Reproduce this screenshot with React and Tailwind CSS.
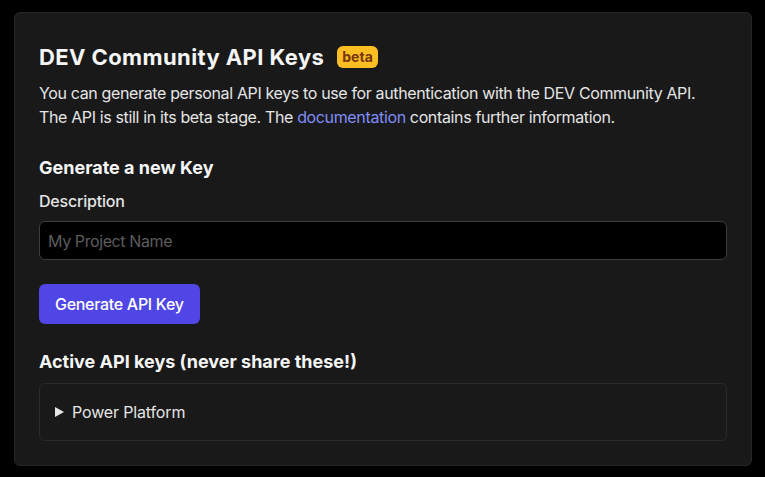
export default function App() {
  return (
    <div className="min-h-[477px] w-[765px] bg-black pt-[12px] pb-[13px] pl-[14px] pr-[13px]" style={{ fontFamily: 'Inter, "Noto Sans", sans-serif' }}>
      <div className="rounded-md border border-[#262626] bg-[#191919] px-6 pt-[30px] pb-[24px] text-[#ededed]">
        <div className="flex items-center gap-[13px]">
          <h1 className="text-[22px] font-bold leading-[28px] tracking-[0.4px] text-[#f5f5f5]">DEV Community API Keys</h1>
          <span className="rounded-md bg-[#fbbf24] px-[5px] text-[14px] font-bold leading-[22px] text-[#78350f]">beta</span>
        </div>
        <p className="mt-[10px] text-[16px] leading-6 tracking-[-0.36px] text-[#e5e5e5]">
          You can generate personal API keys to use for authentication with the DEV Community API.
          <br />
          The API is still in its beta stage. The <a className="text-[#818cf8]">documentation</a> contains further information.
        </p>
        <h2 className="mt-[25px] text-[18px] font-bold leading-[28px] text-[#f5f5f5]">Generate a new Key</h2>
        <label className="mt-[7px] block text-[16px] font-medium leading-6 tracking-[-0.2px] text-[#e5e5e5]">Description</label>
        <div className="mt-[8px] flex h-[39px] items-center rounded-md border border-[#3d3d3d] bg-black px-[8px] text-[16px] tracking-[-0.4px] text-[#5c5c5c]">
          My Project Name
        </div>
        <button className="mt-[24px] h-[40px] rounded-md bg-[#4f46e5] px-4 text-[16px] font-medium tracking-[-0.3px] text-white">Generate API Key</button>
        <h2 className="mt-[24px] text-[18px] font-bold leading-[28px] text-[#f5f5f5]">Active API keys (never share these!)</h2>
        <div className="mt-[7px] flex h-[58px] items-center gap-[8px] rounded-md border border-[#2b2b2b] pl-[15px] pr-4 text-[16px] tracking-[-0.15px] text-[#e5e5e5]">
          <svg width="9" height="10" viewBox="0 0 9 10" className="shrink-0">
            <path d="M0 0 L9 5 L0 10 Z" fill="#e5e5e5" />
          </svg>
          <span>Power Platform</span>
        </div>
      </div>
    </div>
  );
}
